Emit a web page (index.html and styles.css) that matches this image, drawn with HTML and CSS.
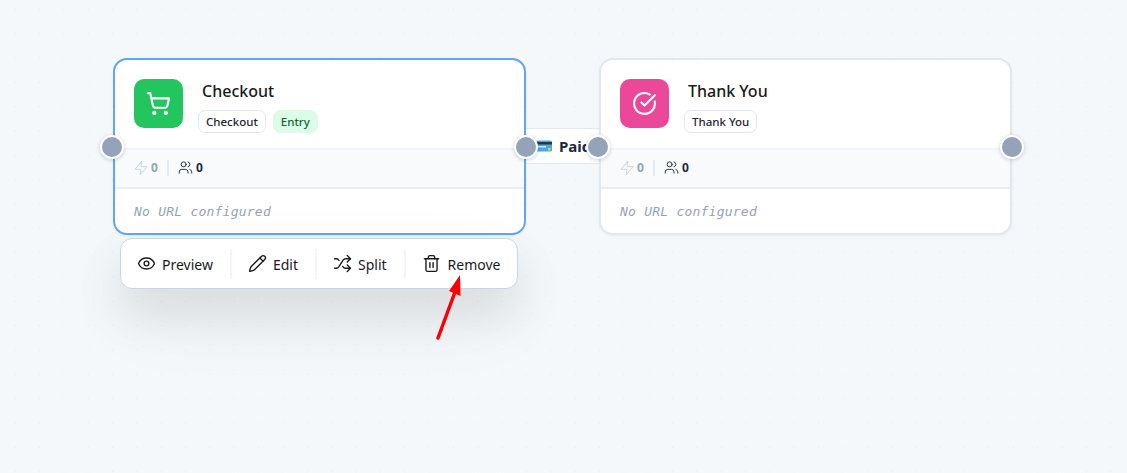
FILE: index.html
```html
<!DOCTYPE html>
<html lang="en">
<head>
    <meta charset="UTF-8">
    <meta name="viewport" content="width=device-width, initial-scale=1.0">
    <title>Funnel Builder</title>
    <link rel="stylesheet" href="styles.css">
</head>
<body>
    <div class="canvas">
        <!-- edge label sits under the nodes -->
        <div class="edge-label">
            <svg class="card-emoji" width="16" height="12" viewBox="0 0 16 12">
                <rect x="0" y="0.5" width="16" height="11" rx="1.5" fill="#4aa8de"/>
                <rect x="0" y="2" width="16" height="2.5" fill="#1f3a52"/>
                <rect x="2" y="6" width="8" height="1.5" fill="#cfe6f5"/>
                <rect x="12" y="8" width="2.5" height="2.5" fill="#f5c542"/>
            </svg>
            <span>Paid</span>
        </div>

        <div class="node node-selected node-checkout">
            <div class="node-head">
                <div class="node-icon icon-green">
                    <svg width="25" height="25" viewBox="0 0 24 24" class="line-icon">
                        <circle cx="8" cy="21" r="1"/>
                        <circle cx="19" cy="21" r="1"/>
                        <path d="M2.05 2.05h2l2.66 12.42a2 2 0 0 0 2 1.58h9.78a2 2 0 0 0 1.95-1.57l1.65-7.43H5.12"/>
                    </svg>
                </div>
                <div class="node-info">
                    <div class="node-title">Checkout</div>
                    <div class="tags">
                        <span class="tag">Checkout</span>
                        <span class="tag tag-entry">Entry</span>
                    </div>
                </div>
            </div>
            <div class="node-stats">
                <span class="stat stat-muted">
                    <svg width="16" height="16" viewBox="0 0 24 24" class="line-icon">
                        <polygon points="13 2 3 14 12 14 11 22 21 10 12 10 13 2"/>
                    </svg>
                    0
                </span>
                <span class="stat-sep"></span>
                <span class="stat">
                    <svg width="15" height="15" viewBox="0 0 24 24" class="line-icon">
                        <path d="M16 21v-2a4 4 0 0 0-4-4H6a4 4 0 0 0-4 4v2"/>
                        <circle cx="9" cy="7" r="4"/>
                        <path d="M22 21v-2a4 4 0 0 0-3-3.87"/>
                        <path d="M16 3.13a4 4 0 0 1 0 7.75"/>
                    </svg>
                    0
                </span>
            </div>
            <div class="node-url">No URL configured</div>
            <span class="handle handle-left"></span>
            <span class="handle handle-right"></span>
        </div>

        <div class="node node-thanks">
            <div class="node-head">
                <div class="node-icon icon-pink">
                    <svg width="25" height="25" viewBox="0 0 24 24" class="line-icon">
                        <path d="M21.801 10A10 10 0 1 1 17 3.335"/>
                        <path d="m9 11 3 3L22 4"/>
                    </svg>
                </div>
                <div class="node-info">
                    <div class="node-title">Thank You</div>
                    <div class="tags">
                        <span class="tag">Thank You</span>
                    </div>
                </div>
            </div>
            <div class="node-stats">
                <span class="stat stat-muted">
                    <svg width="16" height="16" viewBox="0 0 24 24" class="line-icon">
                        <polygon points="13 2 3 14 12 14 11 22 21 10 12 10 13 2"/>
                    </svg>
                    0
                </span>
                <span class="stat-sep"></span>
                <span class="stat">
                    <svg width="15" height="15" viewBox="0 0 24 24" class="line-icon">
                        <path d="M16 21v-2a4 4 0 0 0-4-4H6a4 4 0 0 0-4 4v2"/>
                        <circle cx="9" cy="7" r="4"/>
                        <path d="M22 21v-2a4 4 0 0 0-3-3.87"/>
                        <path d="M16 3.13a4 4 0 0 1 0 7.75"/>
                    </svg>
                    0
                </span>
            </div>
            <div class="node-url">No URL configured</div>
            <span class="handle handle-left"></span>
            <span class="handle handle-right"></span>
        </div>

        <div class="toolbar">
            <button class="tool tool-preview">
                <svg width="19" height="19" viewBox="0 0 24 24" class="line-icon">
                    <path d="M2.062 12.348a1 1 0 0 1 0-.696 10.75 10.75 0 0 1 19.876 0 1 1 0 0 1 0 .696 10.75 10.75 0 0 1-19.876 0"/>
                    <circle cx="12" cy="12" r="3"/>
                </svg>
                Preview
            </button>
            <span class="tool-sep"></span>
            <button class="tool tool-edit">
                <svg width="19" height="19" viewBox="0 0 24 24" class="line-icon">
                    <path d="M21.174 6.812a1 1 0 0 0-3.986-3.987L3.842 16.174a2 2 0 0 0-.5.83l-1.321 4.352a.5.5 0 0 0 .623.622l4.353-1.32a2 2 0 0 0 .83-.497z"/>
                    <path d="m15 5 4 4"/>
                </svg>
                Edit
            </button>
            <span class="tool-sep"></span>
            <button class="tool tool-split">
                <svg width="19" height="19" viewBox="0 0 24 24" class="line-icon">
                    <path d="m18 14 4 4-4 4"/>
                    <path d="m18 2 4 4-4 4"/>
                    <path d="M2 18h1.973a4 4 0 0 0 3.3-1.7l5.454-8.6a4 4 0 0 1 3.3-1.7H22"/>
                    <path d="M2 6h1.972a4 4 0 0 1 3.6 2.2"/>
                    <path d="M22 18h-6.041a4 4 0 0 1-3.3-1.8l-.359-.45"/>
                </svg>
                Split
            </button>
            <span class="tool-sep"></span>
            <button class="tool tool-remove">
                <svg width="19" height="19" viewBox="0 0 24 24" class="line-icon">
                    <path d="M3 6h18"/>
                    <path d="M19 6v14c0 1-1 2-2 2H7c-1 0-2-1-2-2V6"/>
                    <path d="M8 6V4c0-1 1-2 2-2h4c1 0 2 1 2 2v2"/>
                    <line x1="10" x2="10" y1="11" y2="17"/>
                    <line x1="14" x2="14" y1="11" y2="17"/>
                </svg>
                Remove
            </button>
        </div>

        <!-- annotation arrow -->
        <svg class="arrow" width="40" height="80" viewBox="0 0 40 80">
            <line x1="7" y1="68" x2="24" y2="22" stroke="#fb0007" stroke-width="3.5" stroke-linecap="round"/>
            <polygon points="29,5 29.5,26 18,21" fill="#fb0007"/>
        </svg>
    </div>
</body>
</html>
```

FILE: styles.css
```css
* {
    box-sizing: border-box;
}

body {
    margin: 0;
    font-family: 'Noto Sans', 'Open Sans', sans-serif;
    background: #f5f8fb;
    overflow: hidden;
}

.canvas {
    position: relative;
    width: 1127px;
    height: 473px;
    background-color: #f5f8fb;
    background-image: radial-gradient(circle, #e6eaef 0.8px, transparent 1px);
    background-size: 24.35px 24.35px;
    background-position: 3px -3px;
}

.node {
    position: absolute;
    top: 58px;
    width: 413px;
    height: 177px;
    background: white;
    border: 2px solid #e2e8f0;
    border-radius: 14px;
    box-shadow: 0 1px 3px rgba(15, 23, 42, 0.05);
    display: flex;
    flex-direction: column;
}

.node-selected {
    border-color: #60a5fa;
}

.node-checkout {
    left: 113px;
}

.node-thanks {
    left: 599px;
}

.node-head {
    height: 88px;
    padding: 19px 19px 0;
    display: flex;
    gap: 15px;
}

.node-icon {
    width: 49px;
    height: 49px;
    border-radius: 10px;
    display: flex;
    justify-content: center;
    align-items: center;
}

.icon-green {
    background: #22c55e;
    color: white;
}

.icon-pink {
    background: #ec4899;
    color: white;
}

.line-icon {
    fill: none;
    stroke: currentColor;
    stroke-width: 2;
    stroke-linecap: round;
    stroke-linejoin: round;
    flex-shrink: 0;
}

.node-info {
    display: flex;
    flex-direction: column;
    gap: 8px;
    margin-top: 1px;
}

.node-title {
    font-size: 16px;
    font-weight: 500;
    line-height: 22px;
    color: #1a1a1a;
    padding-left: 4px;
}

.tags {
    display: flex;
    gap: 7px;
}

.tag {
    height: 23px;
    padding: 0 7px;
    border: 1px solid #e2e8f0;
    border-radius: 7px;
    font-size: 11.5px;
    font-weight: 500;
    line-height: 21px;
    color: #1f2430;
}

.tag-entry {
    background: #dcfce7;
    border-color: #dcfce7;
    color: #166534;
}

.node-stats {
    height: 41px;
    background: #f8fafc;
    border-top: 2px solid #f1f5f9;
    border-bottom: 2px solid #e9eef3;
    padding: 0 18px 2px;
    display: flex;
    align-items: center;
    font-size: 12px;
    font-weight: 700;
    color: #1e293b;
}

.stat {
    display: flex;
    align-items: center;
    gap: 3px;
}

.stat svg {
    stroke-width: 1.5;
}

.stat-muted {
    gap: 2px;
    color: #94a3b8;
}

.stat-muted svg {
    color: #cbd5e1;
}

.stat-sep {
    width: 2px;
    height: 16px;
    margin: 0 9px;
    background: #e2e8f0;
}

.node-url {
    flex: 1;
    padding: 0 19px;
    display: flex;
    align-items: center;
    font-family: 'DejaVu Sans Mono', monospace;
    font-size: 13px;
    font-style: italic;
    letter-spacing: 0.23px;
    color: #94a3b8;
}

.handle {
    position: absolute;
    top: 75px;
    width: 24px;
    height: 24px;
    border-radius: 50%;
    background: #94a3b8;
    border: 2px solid white;
    box-shadow: 0 1px 4px rgba(15, 23, 42, 0.2);
}

.handle-left {
    left: -15px;
}

.handle-right {
    right: -14px;
}

.edge-label {
    position: absolute;
    left: 520px;
    top: 128px;
    width: 90px;
    height: 36px;
    background: white;
    border: 1px solid #e2e8f0;
    display: flex;
    align-items: center;
    gap: 7px;
    padding-left: 15px;
    font-size: 15px;
    font-weight: 700;
    color: #1e293b;
}

.toolbar {
    position: absolute;
    left: 120px;
    top: 238px;
    width: 398px;
    height: 51px;
    background: white;
    border: 1px solid #cbd5e1;
    border-radius: 12px;
    box-shadow: 0 24px 48px rgba(0, 0, 0, 0.1), 0 30px 80px rgba(0, 0, 0, 0.05);
    display: flex;
    align-items: center;
    padding-left: 16px;
}

.tool {
    border: none;
    background: none;
    padding: 2px 0 0;
    display: flex;
    align-items: center;
    gap: 6px;
    font-family: inherit;
    font-size: 14px;
    color: #1a1a1a;
}

.tool svg {
    margin-top: -2px;
    stroke-width: 1.75;
}

.tool-remove {
    gap: 7px;
}

.tool-sep {
    width: 2px;
    height: 30px;
    margin: 0 16px 0 17px;
    background: #f1f5f9;
}

.arrow {
    position: absolute;
    left: 431px;
    top: 270px;
}
```
